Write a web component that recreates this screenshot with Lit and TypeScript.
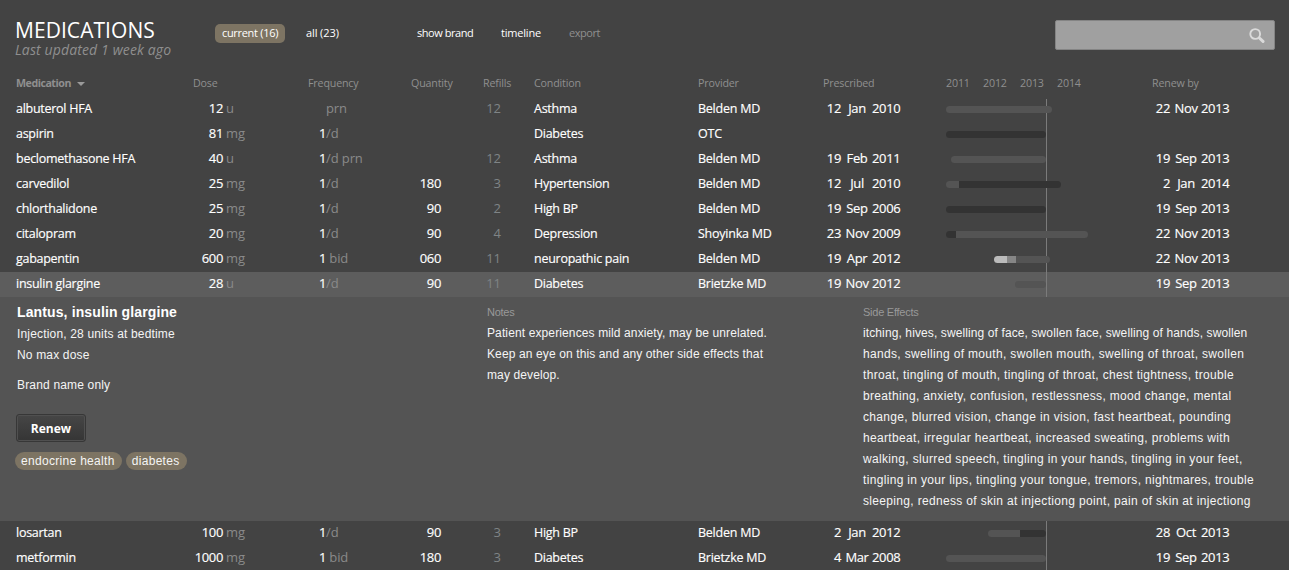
import { LitElement, html, css, nothing } from "lit";
import { customElement, property } from "lit/decorators.js";
import { classMap } from "lit/directives/class-map.js";
import { styleMap } from "lit/directives/style-map.js";

type Tone = "mid" | "dark" | "light" | "soft";
interface Span { start: number; width: number; parts: [number, Tone][] }
interface Med {
  name: string;
  dose: string;
  unit: string;
  freq: string;
  freqUnit: string;
  qty: string;
  refills: string;
  condition: string;
  provider: string;
  prescribed: string[];
  renew: string[];
  span: Span;
  open?: boolean;
}

const med = (
  name: string, dose: string, unit: string, freq: string, freqUnit: string, qty: string, refills: string,
  condition: string, provider: string, prescribed: string, renew: string, start: number, parts: [number, Tone][], open = false
): Med => ({
  name, dose, unit, freq, freqUnit, qty, refills, condition, provider,
  prescribed: prescribed ? prescribed.split(" ") : [],
  renew: renew ? renew.split(" ") : [],
  span: { start, width: parts.reduce((n, p) => n + p[0], 0), parts },
  open,
});

const MEDS: Med[] = [
  med("albuterol HFA", "12", "u", "", "prn", "", "12", "Asthma", "Belden MD", "12 Jan 2010", "22 Nov 2013", 0, [[106, "mid"]]),
  med("aspirin", "81", "mg", "1", "/d", "", "", "Diabetes", "OTC", "", "", 0, [[100, "dark"]]),
  med("beclomethasone HFA", "40", "u", "1", "/d prn", "", "12", "Asthma", "Belden MD", "19 Feb 2011", "19 Sep 2013", 5, [[95, "mid"]]),
  med("carvedilol", "25", "mg", "1", "/d", "180", "3", "Hypertension", "Belden MD", "12 Jul 2010", "2 Jan 2014", 0, [[13, "mid"], [102, "dark"]]),
  med("chlorthalidone", "25", "mg", "1", "/d", "90", "2", "High BP", "Belden MD", "19 Sep 2006", "19 Sep 2013", 0, [[100, "dark"]]),
  med("citalopram", "20", "mg", "1", "/d", "90", "4", "Depression", "Shoyinka MD", "23 Nov 2009", "22 Nov 2013", 0, [[10, "dark"], [132, "mid"]]),
  med("gabapentin", "600", "mg", "1", " bid", "060", "11", "neuropathic pain", "Belden MD", "19 Apr 2012", "22 Nov 2013", 48, [[13, "light"], [9, "soft"], [34, "mid"]]),
  med("insulin glargine", "28", "u", "1", "/d", "90", "11", "Diabetes", "Brietzke MD", "19 Nov 2012", "19 Sep 2013", 69, [[31, "mid"]], true),
  med("losartan", "100", "mg", "1", "/d", "90", "3", "High BP", "Belden MD", "2 Jan 2012", "28 Oct 2013", 42, [[32, "mid"], [26, "dark"]]),
  med("metformin", "1000", "mg", "1", " bid", "180", "3", "Diabetes", "Brietzke MD", "4 Mar 2008", "19 Sep 2013", 0, [[100, "mid"]]),
];

const SIDE_EFFECTS = [
  "itching, hives, swelling of face, swollen face, swelling of hands, swollen",
  "hands, swelling of mouth, swollen mouth, swelling of throat, swollen",
  "throat, tingling of mouth, tingling of throat, chest tightness, trouble",
  "breathing, anxiety, confusion, restlessness, mood change, mental",
  "change, blurred vision, change in vision, fast heartbeat, pounding",
  "heartbeat, irregular heartbeat, increased sweating, problems with",
  "walking, slurred speech, tingling in your hands, tingling in your feet,",
  "tingling in your lips, tingling your tongue, tremors, nightmares, trouble",
  "sleeping, redness of skin at injectiong point, pain of skin at injectiong",
];

const NOTES = [
  "Patient experiences mild anxiety, may be unrelated.",
  "Keep an eye on this and any other side effects that",
  "may develop.",
];

const columns = css`
  .cols {
    display: grid;
    grid-template-columns: 177px 115px 103px 72px 51px 164px 125px 123px 206px 1fr;
    padding-left: 16px;
    white-space: pre;
  }
`;

@customElement("med-row")
class MedRow extends LitElement {
  @property({ attribute: false }) med!: Med;
  @property({ type: Boolean }) first = false;

  static styles = [
    columns,
    css`
      :host { display: block; }
      .cols { height: 25px; line-height: 23px; font-size: 13px; color: #fff; }
      .active { background: #5d5d5d; }
      .name, .cond, .prov { font-size: 12.5px; letter-spacing: -0.27px; -webkit-text-stroke: 0.15px #fff; }
      .prov { letter-spacing: -0.24px; }
      .num { display: grid; grid-template-columns: 30px 1fr; }
      .num b, .freq b, .date b { font-weight: 400; text-align: right; }
      .num b, .freq b, .qty, .date { letter-spacing: -0.35px; -webkit-text-stroke: 0.15px #fff; }
      .num i, .freq i { font-style: normal; color: #8a8a8a; }
      .num i { padding-left: 3px; }
      .freq { display: grid; grid-template-columns: 18px 1fr; }
      .freq i { letter-spacing: -0.1px; }
      .qty { width: 30px; text-align: right; }
      .refills { width: 18px; text-align: right; color: #7f8486; }
      .date { display: grid; grid-template-columns: 18px 31px 1fr; }
      .date span { text-align: center; }
      .date .month { padding-left: 1px; }
      .date .year { text-align: left; }
      .line {
        display: flow-root;
        height: 25px;
        width: 100px;
        border-right: 1px solid #7b7b7b;
      }
      .bar {
        display: flex;
        height: 7px;
        border-radius: 3.5px;
        overflow: hidden;
        margin-top: 9px;
      }
      .first .line { height: 23px; margin-top: 2px; }
      .first .bar { margin-top: 7px; }
      .mid { background: #545454; }
      .dark { background: #333; }
      .light { background: #bbb; }
      .soft { background: #868686; }
    `,
  ];

  private date(d: string[]) {
    return html`<div class="date">${d.length ? html`<b>${d[0]}</b><span class="month">${d[1]}</span><span class="year">${d[2]}</span>` : nothing}</div>`;
  }

  render() {
    const m = this.med;
    return html`
      <div class=${classMap({ cols: true, active: !!m.open, first: this.first })}>
        <div class="name">${m.name}</div>
        <div class="num"><b>${m.dose}</b><i>${m.unit}</i></div>
        <div class="freq"><b>${m.freq}</b><i>${m.freqUnit}</i></div>
        <div class="qty">${m.qty}</div>
        <div class="refills">${m.refills}</div>
        <div class="cond">${m.condition}</div>
        <div class="prov">${m.provider}</div>
        ${this.date(m.prescribed)}
        <div class="line"><div class="bar" style=${styleMap({ marginLeft: `${m.span.start}px`, width: `${m.span.width}px` })}>
          ${m.span.parts.map(([w, tone]) => html`<div class=${tone} style=${styleMap({ width: `${w}px` })}></div>`)}
        </div></div>
        ${this.date(m.renew)}
      </div>
    `;
  }
}

@customElement("med-detail")
class MedDetail extends LitElement {
  static styles = css`
    :host {
      display: grid;
      grid-template-columns: 471px 376px 1fr;
      height: 224px;
      box-sizing: border-box;
      padding-left: 16px;
      background: #545454;
      color: #f4f4f4;
      font: 12px/21px "Liberation Sans", Arial, sans-serif;
      white-space: nowrap;
      overflow: hidden;
    }
    .main { padding: 4px 0 0 1px; letter-spacing: 0.17px; }
    h2 { margin: 0 0 1px; font-size: 14px; line-height: 22px; font-weight: 700; color: #fff; letter-spacing: 0.12px; }
    .brand { margin-top: 9px; }
    .col { padding-top: 9px; }
    .label { font-size: 11px; line-height: 13px; color: #999; margin-bottom: 4px; letter-spacing: -0.25px; }
    .notes { letter-spacing: 0.12px; }
    .effects { letter-spacing: 0.33px; }
    .effects .line:nth-child(2) { letter-spacing: 0.11px; }
    .renew {
      display: block;
      width: 70px;
      height: 28px;
      margin: 18px 0 0 -1px;
      padding: 0;
      border: 1px solid #373737;
      border-radius: 3px;
      box-shadow: inset 0 0 0 1px #505050;
      background: linear-gradient(#464646, #353535);
      color: #fff;
      font: 700 12px/28px "Open Sans", sans-serif;
    }
    .tags { display: flex; gap: 4px; margin: 10px 0 0 -2px; letter-spacing: 0.31px; }
    .tag { height: 18px; line-height: 18px; padding: 0 7px 0 6px; border-radius: 9px; background: #7d7463; }
  `;

  render() {
    return html`
      <div class="main">
        <h2>Lantus, insulin glargine</h2>
        <div>Injection, 28 units at bedtime</div>
        <div>No max dose</div>
        <div class="brand">Brand name only</div>
        <button class="renew">Renew</button>
        <div class="tags"><span class="tag">endocrine health</span><span class="tag">diabetes</span></div>
      </div>
      <div class="col notes">
        <div class="label">Notes</div>
        ${NOTES.map((l) => html`<div class="line">${l}</div>`)}
      </div>
      <div class="col effects">
        <div class="label">Side Effects</div>
        ${SIDE_EFFECTS.map((l) => html`<div class="line">${l}</div>`)}
      </div>
    `;
  }
}

@customElement("app-root")
class AppRoot extends LitElement {
  static styles = [
    columns,
    css`
      :host {
        display: block;
        height: 570px;
        overflow: hidden;
        background: #434343;
        color: #fff;
        font-family: "Open Sans", sans-serif;
      }
      header { display: flex; height: 73px; padding-left: 15px; white-space: nowrap; }
      .title { width: 200px; padding-top: 19px; }
      h1 { margin: 0; font-size: 21px; line-height: 23px; font-weight: 400; letter-spacing: 0.05px; }
      .updated { font-size: 14px; line-height: 16px; font-style: italic; color: #8f8f8f; letter-spacing: 0.13px; }
      nav { display: flex; padding-top: 24px; font-size: 11px; line-height: 18px; flex: 1; letter-spacing: -0.3px; }
      .pill { width: 70px; height: 19px; text-align: center; border-radius: 5px; background: #7d7463; }
      .all { margin-left: 21px; width: 111px; letter-spacing: -0.1px; }
      .brand { width: 84px; letter-spacing: -0.45px; }
      .time { width: 68px; letter-spacing: -0.2px; }
      .export { color: #8f8f8f; letter-spacing: -0.45px; }
      .search {
        box-sizing: border-box;
        width: 220px;
        height: 30px;
        margin: 20px 14px 0 0;
        padding: 7px 9px 0 0;
        border: 1px solid #848484;
        border-radius: 2px;
        background: #a0a0a0;
        display: flex;
        justify-content: flex-end;
      }
      .head { height: 24px; line-height: 20px; font-size: 10.7px; color: #8f8f8f; letter-spacing: -0.17px; }
      .sort { font-weight: 700; display: flex; align-items: center; height: 20px; gap: 6px; letter-spacing: -0.5px; }
      .caret { border: 4px solid transparent; border-top-color: #9a9a9a; border-bottom: 0; margin-top: 1px; }
      .years { display: grid; grid-template-columns: repeat(4, 37px); }
    `,
  ];

  render() {
    return html`
      <header>
        <div class="title">
          <h1>MEDICATIONS</h1>
          <div class="updated">Last updated 1 week ago</div>
        </div>
        <nav>
          <div class="pill">current (16)</div>
          <div class="all">all (23)</div>
          <div class="brand">show brand</div>
          <div class="time">timeline</div>
          <div class="export">export</div>
        </nav>
        <div class="search">
          <svg width="16" height="16" viewBox="0 0 16 16" fill="none" stroke="#dadada">
            <circle cx="6.2" cy="6" r="4.9" stroke-width="1.9" />
            <path d="M10.4 10L14 13.4" stroke-width="3" stroke-linecap="round" />
          </svg>
        </div>
      </header>
      <div class="cols head">
        <div class="sort"><span>Medication</span><span class="caret"></span></div>
        <div>Dose</div>
        <div>Frequency</div>
        <div>Quantity</div>
        <div>Refills</div>
        <div>Condition</div>
        <div>Provider</div>
        <div>Prescribed</div>
        <div class="years"><span>2011</span><span>2012</span><span>2013</span><span>2014</span></div>
        <div>Renew by</div>
      </div>
      ${MEDS.map((m, i) => html`
        <med-row .med=${m} ?first=${i === 0}></med-row>
        ${m.open ? html`<med-detail></med-detail>` : nothing}
      `)}
    `;
  }
}
